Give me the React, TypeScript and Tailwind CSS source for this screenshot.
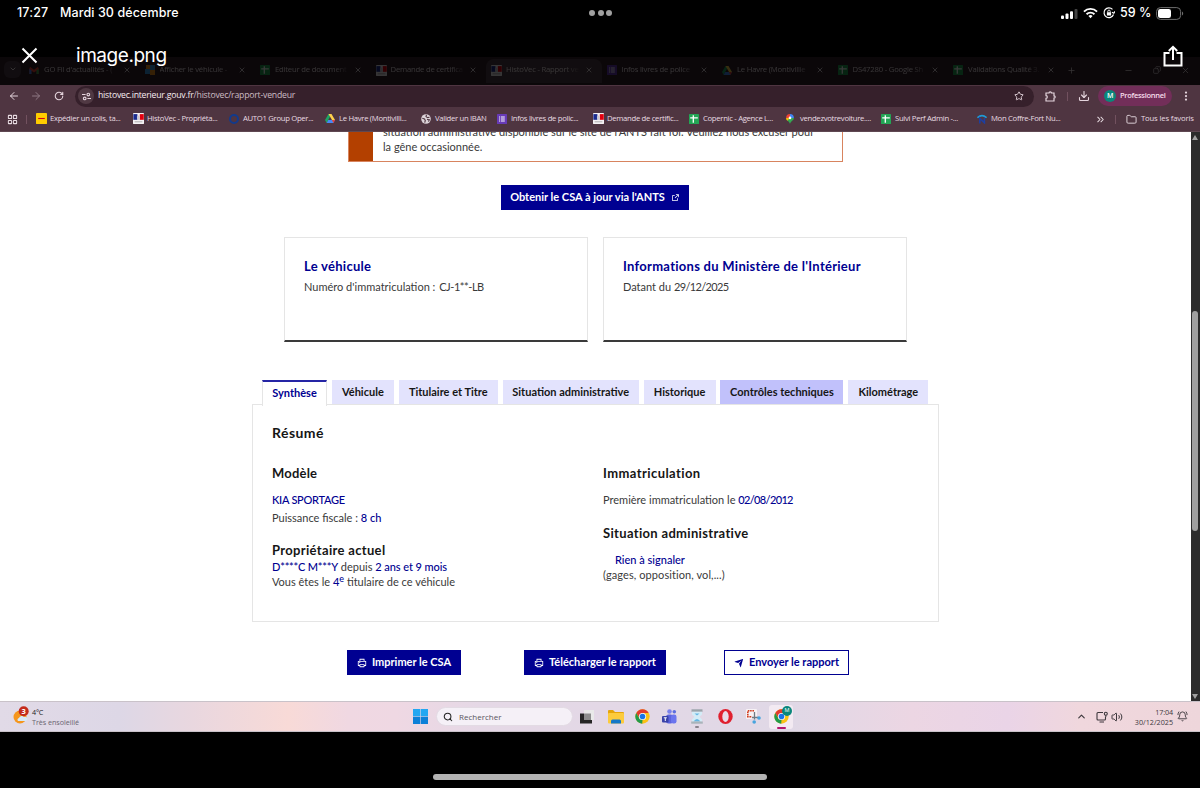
import type { ReactNode } from "react";
import clsx from "clsx";
import {
  ArrowLeft,
  ArrowRight,
  BellRing,
  ChevronDown,
  ChevronUp,
  ChevronsRight,
  Copy,
  Download,
  EllipsisVertical,
  Folder,
  LayoutGrid,
  Minus,
  Plus,
  RotateCw,
  Search,
  Star,
  Volume2,
  X,
} from "lucide-react";
import { RiExternalLinkLine, RiPrinterLine, RiSendPlaneFill } from "react-icons/ri";

/* ---------- small logos ---------- */

function FrenchFlag() {
  return (
    <svg viewBox="0 0 10 10" className="size-[11px] shrink-0">
      <rect width="10" height="10" rx=".4" fill="#f4f1f4" />
      <rect x=".3" y="1" width="3.700" height="5.200" fill="#1b2c8f" />
      <rect x="6.200" y="1" width="3.600" height="5.200" fill="#e1000f" />
      <path d="M3.500 3.500 5 2l1.200 2v2.200H4z" fill="#c9c9d4" />
      <path d="M1.500 8h7" stroke="#8a8a8a" strokeWidth=".6" />
    </svg>
  );
}

function Sheets() {
  return (
    <svg viewBox="0 0 10 10" className="size-[10px] shrink-0">
      <rect width="10" height="10" rx=".6" fill="#23a455" />
      <path d="M1.200 3.800h7.600M4.300 1.200v7.600" stroke="#fff" strokeWidth="1.300" />
    </svg>
  );
}

function Forms() {
  return (
    <svg viewBox="0 0 10 10" className="size-[10px] shrink-0">
      <rect width="10" height="10" rx=".6" fill="#673ab7" />
      <path d="M3.800 3h4M3.800 5h4M3.800 7h4M2 3h1M2 5h1M2 7h1" stroke="#fff" strokeWidth="1" />
    </svg>
  );
}

function Drive() {
  return (
    <svg viewBox="0 0 20 18" className="h-[9px] w-[10px] shrink-0">
      <path d="M7 0h6l-3 5.500L3.300 18 0 12z" fill="#1ea362" />
      <path d="M7 0h6l7 12h-6z" fill="#ffd04b" />
      <path d="M6.500 12H20l-3.300 6H3.300z" fill="#4688f4" />
      <path d="M14 12h6l-3.300 6z" fill="#e94235" />
    </svg>
  );
}

function Gmail() {
  return (
    <svg viewBox="0 0 20 15" className="h-[7px] w-[10px] shrink-0">
      <path d="M0 2v13h4.500V8L10 12l5.500-4v7H20V2l-2-2-8 6-8-6z" fill="#ea4335" />
      <path d="M0 4v11h4.500V7z" fill="#4285f4" />
      <path d="M20 4v11h-4.500V7z" fill="#34a853" />
    </svg>
  );
}

function Dhl() {
  return (
    <svg viewBox="0 0 10 10" className="size-[11px] shrink-0">
      <rect width="10" height="10" rx=".4" fill="#ffcc00" />
      <path d="M2 5h6" stroke="#d40511" strokeWidth="1" />
    </svg>
  );
}

function Squares() {
  return (
    <svg viewBox="0 0 10 10" className="size-[10px] shrink-0">
      <path d="M5 0h5v5H5z" fill="#3a9be8" />
      <path d="M0 4h5v5H0z" fill="#3a9be8" />
      <path d="M1 0h4v4H1zM5 5h5v5H5z" fill="#f2941e" />
    </svg>
  );
}

function Pin() {
  return (
    <svg viewBox="0 0 14 18" className="h-[10px] w-[8px] shrink-0">
      <path d="M7 18C6 12 0 12 0 7h14c0 5-6 5-7 11z" fill="#34a853" />
      <path d="M0 7a7 7 0 0 1 7-7v7z" fill="#ea4335" />
      <path d="M7 0a7 7 0 0 1 7 7H7z" fill="#4285f4" />
      <path d="M0 7h7l-5 5C.7 10.600 0 9 0 7z" fill="#fbbc04" />
      <circle cx="7" cy="7" r="2.400" fill="#fff" />
    </svg>
  );
}

function Earth() {
  return (
    <svg viewBox="0 0 10 10" className="size-[10px] shrink-0">
      <circle cx="5" cy="5" r="4.800" fill="#dcd3d8" />
      <path d="M1.300 4.200 3.500 5l.8 1.500-.6 2.200M5.500.8 5 2.600l1.500 1 2-.4M6 5.500l2.300.3-.8 1.800" fill="none" stroke="#4f3541" strokeWidth="1.100" />
    </svg>
  );
}

function CoffreFort() {
  return (
    <svg viewBox="0 0 10 10" className="size-[10px] shrink-0" fill="none">
      <path d="M.4 3.600q4.600-4 9.200 0" stroke="#1f9ad6" strokeWidth="1.500" />
      <path d="M2.800 9.600V4.400l4.600 4.400V4" stroke="#1d3fa0" strokeWidth="1.600" />
    </svg>
  );
}

function Chrome({ className }: { className?: string }) {
  return (
    <svg viewBox="0 0 48 48" className={clsx("shrink-0", className)}>
      <circle cx="24" cy="24" r="23" fill="#fbc116" />
      <path d="M4.100 12.500A23 23 0 0 1 43.900 12.500H24L14 29z" fill="#e33b2e" />
      <path d="M4.100 12.500 14 30l10 4-1 13A23 23 0 0 1 4.100 12.500z" fill="#229a4a" />
      <circle cx="24" cy="24" r="11.500" fill="#fff" />
      <circle cx="24" cy="24" r="9" fill="#1a73e8" />
    </svg>
  );
}

/* ---------- data ---------- */

const browserTabs: { label: string; icon: ReactNode; active?: boolean }[] = [
  { label: "GO Fil d'actualités - (", icon: <Gmail /> },
  { label: "Afficher le véhicule - ", icon: <Squares /> },
  { label: "Editeur de document", icon: <Sheets /> },
  { label: "Demande de certifica", icon: <FrenchFlag /> },
  { label: "HistoVec - Rapport ve", icon: <FrenchFlag />, active: true },
  { label: "Infos livres de police", icon: <Forms /> },
  { label: "Le Havre (Montivillie", icon: <Drive /> },
  { label: "DS47280 - Google Sh", icon: <Sheets /> },
  { label: "Validations Qualité 3.", icon: <Sheets /> },
];

const bookmarks: { label: string; icon: ReactNode; width: string }[] = [
  { label: "Expédier un colis, ta...", icon: <Dhl />, width: "w-[97px]" },
  { label: "HistoVec - Propriéta...", icon: <FrenchFlag />, width: "w-[96px]" },
  {
    label: "AUTO1 Group Oper...",
    icon: <span className="size-[10px] shrink-0 rounded-full border-[2.500px] border-[#123a8c]" />,
    width: "w-[96px]",
  },
  { label: "Le Havre (Montivilli...", icon: <Drive />, width: "w-[96px]" },
  { label: "Valider un IBAN", icon: <Earth />, width: "w-[76px]" },
  { label: "Infos livres de polic...", icon: <Forms />, width: "w-[96px]" },
  { label: "Demande de certific...", icon: <FrenchFlag />, width: "w-[96px]" },
  { label: "Copernic - Agence L...", icon: <Sheets />, width: "w-[97px]" },
  { label: "vendezvotrevoiture....", icon: <Pin />, width: "w-[95px]" },
  { label: "Suivi Perf Admin -...", icon: <Sheets />, width: "w-[96px]" },
  { label: "Mon Coffre-Fort Nu...", icon: <CoffreFort />, width: "w-[96px]" },
];

const reportTabs = [
  {
    label: "Synthèse",
    className: "w-[65px] border-t-2 border-x border-x-[#e5e5e5] border-t-[#2525a5] bg-white pb-[2px] text-[#000091] h-[26px]",
  },
  { label: "Véhicule", className: "w-[62px] bg-[#e3e3fd] text-[#161616] h-6" },
  { label: "Titulaire et Titre", className: "w-[99px] bg-[#e3e3fd] text-[#161616] h-6" },
  { label: "Situation administrative", className: "w-[136px] bg-[#e3e3fd] text-[#161616] h-6" },
  { label: "Historique", className: "w-[72px] bg-[#e3e3fd] text-[#161616] h-6" },
  { label: "Contrôles techniques", className: "w-[123px] bg-[#c1c1fb] text-[#161616] h-6" },
  { label: "Kilométrage", className: "w-[80px] bg-[#e3e3fd] text-[#161616] h-6" },
];

/* ---------- viewer chrome ---------- */

function StatusBar() {
  return (
    <div className="flex h-[26px] items-center pl-[17px] pr-[16px] text-[12.500px] font-medium text-white">
      <span className="w-[43px] tracking-[0.150px]">17:27</span>
      <span className="w-[532px] tracking-[0.100px]">Mardi 30 décembre</span>
      <div className="-ml-[3px] flex gap-[2.500px]">
        <span className="size-[6px] rounded-full bg-[#a0a0a0]" />
        <span className="size-[6px] rounded-full bg-[#a0a0a0]" />
        <span className="size-[6px] rounded-full bg-[#a0a0a0]" />
      </div>
      <div className="ml-auto flex items-center">
        <svg viewBox="0 0 18 12" className="mt-px h-3 w-[18px]" fill="#fff">
          <rect x="0" y="7.500" width="3" height="3.500" rx="1" />
          <rect x="4.500" y="5.500" width="3" height="5.500" rx="1" />
          <rect x="9" y="3.200" width="3" height="7.800" rx="1" />
          <rect x="13.500" y="1" width="3" height="10" rx="1" fill="#444" />
        </svg>
        <svg viewBox="0 0 16 12" className="ml-[4px] h-3 w-[15px]" fill="none" stroke="#fff" strokeWidth="2">
          <path d="M1 4.500a10 10 0 0 1 14 0M3.800 7.300a6 6 0 0 1 8.400 0" />
          <path d="M8 11.500 5.800 9.300a3 3 0 0 1 4.400 0z" fill="#fff" stroke="none" />
        </svg>
        <svg viewBox="0 0 12 12" className="ml-[5px] size-[12px]" fill="none" stroke="#fff" strokeWidth="1.200">
          <path d="M9.500 2.300A4.900 4.900 0 1 0 10.500 7.500" />
          <path d="m9 5.200 1.800 1 1.100-1.800" />
          <rect x="3.900" y="5.300" width="4.200" height="3.200" rx=".5" fill="#fff" stroke="none" />
          <path d="M4.800 5.500V4.300a1.200 1.200 0 0 1 2.400 0v1.200" strokeWidth=".9" />
        </svg>
        <span className="ml-[5px] w-[31px] whitespace-nowrap">59 %</span>
        <svg viewBox="0 0 28 13" className="ml-[5px] h-[13px] w-[28px]">
          <rect x=".6" y=".6" width="24" height="11.800" rx="3.800" fill="none" stroke="#6e6e6e" />
          <rect x="2" y="2" width="13" height="9" rx="2.300" fill="#fff" />
          <path d="M26 4.500c1.600.5 1.600 3.500 0 4z" fill="#6e6e6e" />
        </svg>
      </div>
    </div>
  );
}

function ViewerHeader() {
  return (
    <header className="absolute inset-x-0 top-0 z-10 h-[85px] bg-black/78 font-['Inter',sans-serif]">
      <StatusBar />
      <div className="flex h-[59px] items-center pl-[21px] pr-[17px] text-white">
        <svg viewBox="0 0 17 17" className="size-[17px]" stroke="#fff" strokeWidth="2">
          <path d="m1.500 1.500 14 14M15.500 1.500l-14 14" />
        </svg>
        <h1 className="ml-[38px] text-[19px] leading-none font-normal tracking-[-0.450px]">image.png</h1>
        <svg viewBox="0 0 20 22" className="ml-auto h-[22px] w-[20px]" fill="none" stroke="#fff" strokeWidth="2">
          <path d="M6.500 8H1.500v12.500h17V8h-5M10 15V2M5.800 6 10 1.800 14.200 6" />
        </svg>
      </div>
    </header>
  );
}

/* ---------- browser ---------- */

function TabStrip() {
  return (
    <div className="flex h-7 items-center bg-[#33202b] text-[7.700px] text-[#f3e8ee]">
      <span className="mb-1 ml-1 flex size-[17px] items-center justify-center rounded-md bg-[#503e48]">
        <ChevronDown className="size-[8px]" strokeWidth={3} />
      </span>
      <div className="ml-[3px] flex">
        {browserTabs.map((tab) => (
          <div
            key={tab.label}
            className={clsx(
              "flex h-6 w-[115.500px] items-center rounded-t-lg pb-[2px] pl-[5px] pr-[9px]",
              tab.active && "bg-[#503e48]"
            )}
          >
            <span className="flex w-[15px] shrink-0">{tab.icon}</span>
            <span className="w-[74px] shrink-0 whitespace-nowrap mask-r-from-80% tracking-[-0.200px]">
              {tab.label}
            </span>
            <X className="ml-auto size-[8px] shrink-0" strokeWidth={2.500} />
          </div>
        ))}
      </div>
      <Plus className="mb-[2px] ml-[3px] size-[9px]" />
      <Minus className="mb-[2px] ml-auto size-[9px]" />
      <Copy className="mb-[2px] ml-[20px] size-[8px] -scale-x-100" />
      <X className="mb-[2px] ml-[20px] mr-[10px] size-[9px]" />
    </div>
  );
}

function Toolbar() {
  return (
    <div className="flex h-[22px] items-center bg-[#4f3541] text-[#e5d5dd]">
      <ArrowLeft className="ml-[8px] size-[12px]" strokeWidth={2} />
      <ArrowRight className="ml-[10px] size-[12px] text-[#8f7984]" strokeWidth={2} />
      <RotateCw className="ml-[12px] size-[10px]" strokeWidth={2.600} />
      <div className="ml-[11px] flex h-[21px] w-[959px] items-center rounded-full bg-[#36202b] pl-[3px] pr-[10px]">
        <span className="flex size-[16px] items-center justify-center rounded-full bg-[#503943]">
          <svg viewBox="0 0 10 10" className="size-[9px]" fill="none" stroke="#e5d5dd" strokeWidth="1.200">
            <path d="M0 2.800h4M6 7.200h4" />
            <circle cx="7" cy="2.800" r="1.500" />
            <circle cx="3" cy="7.200" r="1.500" />
          </svg>
        </span>
        <span className="ml-[4px] text-[8.700px] tracking-[-0.220px] text-[#ccbcc4]">
          <span className="text-[#f6edf2]">histovec.interieur.gouv.fr</span>/histovec/rapport-vendeur
        </span>
        <Star className="ml-auto size-[10px]" strokeWidth={2.200} />
      </div>
      <svg viewBox="0 0 11 11" className="ml-[11px] size-[11px]" fill="none" stroke="currentColor" strokeWidth="1.200">
        <path d="M1 2h3a1.200 1.200 0 0 1 2.400 0H9v2.800a1.200 1.200 0 0 1 0 2.400V10H1V7.300a1.300 1.300 0 0 0 0-2.600z" />
      </svg>
      <span className="ml-[11px] h-[9px] w-px bg-[#72515f]" />
      <Download className="ml-[10px] size-[12px]" strokeWidth={2.200} />
      <div className="ml-[8px] flex h-[20px] w-[74px] items-center rounded-full bg-[#722e59] pl-[6px] text-[7.500px] font-semibold tracking-[-0.300px] text-[#f7dcea]">
        <span className="mr-[4px] flex size-[12px] items-center justify-center rounded-full bg-[#0a877b] text-[7px] text-white">
          M
        </span>
        Professionnel
      </div>
      <EllipsisVertical className="ml-[8px] size-[12px]" strokeWidth={2.500} />
    </div>
  );
}

function BookmarksBar() {
  return (
    <div className="flex h-[25px] items-center border-b border-[#5f4852] bg-[#4f3541] text-[7.700px] tracking-[-0.300px] text-[#e8dce2]">
      <LayoutGrid className="ml-[7px] size-[11px]" strokeWidth={2.200} />
      <span className="ml-[8px] mr-[9px] h-[9px] w-px bg-[#72515f]" />
      {bookmarks.map((b) => (
        <div key={b.label} className={clsx("flex shrink-0 items-center whitespace-nowrap", b.width)}>
          <span className="flex w-[14px] shrink-0">{b.icon}</span>
          {b.label}
        </div>
      ))}
      <ChevronsRight className="ml-auto size-[11px]" strokeWidth={2.200} />
      <span className="ml-[9px] h-[9px] w-px bg-[#72515f]" />
      <Folder className="ml-[10px] size-[11px]" />
      <span className="ml-[4px] mr-[9px] w-[50px] whitespace-nowrap tracking-[-0.150px]">Tous les favoris</span>
    </div>
  );
}

/* ---------- report page ---------- */

function InfoCard({ title, children }: { title: string; children: ReactNode }) {
  return (
    <div className="h-[105px] w-[304px] border border-b-[2.500px] border-[#e5e5e5] border-b-[#3a3a3a] px-[19px] pt-[19px]">
      <h3 className="text-[13px] leading-[18px] font-bold tracking-[0.280px] text-[#000091]">{title}</h3>
      <p className="mt-[4px] leading-4">{children}</p>
    </div>
  );
}

function Blue({ children, className }: { children: ReactNode; className?: string }) {
  return <span className={clsx("font-medium text-[#000091]", className)}>{children}</span>;
}

function ActionButton({ icon, children, className }: { icon: ReactNode; children: ReactNode; className: string }) {
  return (
    <button
      className={clsx(
        "flex h-[25px] items-center justify-center gap-[5px] whitespace-nowrap border border-[#000091] text-[11px] font-bold",
        className
      )}
    >
      {icon}
      {children}
    </button>
  );
}

function Report() {
  return (
    <main className="relative flex-1 overflow-hidden font-['Lato',sans-serif] text-[11px] text-[#3a3a3a]">
      <div className="-mt-[8px] ml-[348px] flex h-[38px] w-[495px] border border-[#d8845e]">
        <div className="w-[24px] bg-[#b34000]" />
        <p className="-mt-px ml-[10px] whitespace-nowrap leading-[15px]">
          situation administrative disponible sur le site de l'ANTS fait foi. Veuillez nous excuser pour
          <br />
          la gêne occasionnée.
        </p>
      </div>

      <button className="ml-[501px] mt-[23px] flex h-[25px] w-[188px] items-center justify-center gap-[6px] whitespace-nowrap bg-[#000091] text-[11px] font-bold text-white">
        Obtenir le CSA à jour via l'ANTS
        <RiExternalLinkLine className="size-[9px]" />
      </button>

      <div className="ml-[284px] mt-[27px] flex gap-[15px]">
        <InfoCard title="Le véhicule">
          Numéro d'immatriculation : <span className="ml-[1px] tracking-[-0.450px]">CJ-1**-LB</span>
        </InfoCard>
        <InfoCard title="Informations du Ministère de l'Intérieur">
          Datant du <span className="tracking-[-0.650px]">29/12/2025</span>
        </InfoCard>
      </div>

      <div className="relative z-[1] -mb-px ml-[262px] mt-[38px] flex h-[25px] items-start gap-[4.900px]">
        {reportTabs.map((tab) => (
          <div
            key={tab.label}
            className={clsx(
              "flex shrink-0 items-center justify-center whitespace-nowrap text-[11px] font-bold",
              tab.className
            )}
          >
            {tab.label}
          </div>
        ))}
      </div>

      <section className="ml-[252px] flex h-[218px] w-[687px] border border-[#e5e5e5] pl-[19px] pt-[18px]">
        <div className="w-[331px]">
          <h2 className="text-[14px] leading-5 font-bold tracking-[0.450px] text-[#161616]">Résumé</h2>
          <h3 className="mt-5 text-[13px] leading-5 font-bold tracking-[0.200px] text-[#161616]">Modèle</h3>
          <p className="mt-[9px] leading-4">
            <Blue className="tracking-[-0.250px]">KIA SPORTAGE</Blue>
          </p>
          <p className="mt-[2px] leading-4">
            Puissance fiscale : <Blue>8 ch</Blue>
          </p>
          <h3 className="mt-[15px] text-[13px] leading-[18px] font-bold tracking-[0.330px] text-[#161616]">
            Propriétaire actuel
          </h3>
          <p className="leading-[15px]">
            <Blue className="tracking-[-0.200px]">D****C M***Y</Blue> depuis{" "}
            <Blue className="tracking-[-0.080px]">2 ans et 9 mois</Blue>
          </p>
          <p className="leading-[15px]">
            Vous êtes le{" "}
            <Blue>
              4<sup className="text-[9px] leading-none">e</sup>
            </Blue>{" "}
            titulaire de ce véhicule
          </p>
        </div>
        <div className="pt-10">
          <h3 className="text-[13px] leading-5 font-bold tracking-[0.420px] text-[#161616]">Immatriculation</h3>
          <p className="mt-[9px] leading-4">
            Première immatriculation le <Blue className="tracking-[-0.650px]">02/08/2012</Blue>
          </p>
          <h3 className="mt-4 text-[13px] leading-[18px] font-bold tracking-[0.330px] text-[#161616]">
            Situation administrative
          </h3>
          <p className="mt-[10px] pl-3 leading-4">
            <Blue>Rien à signaler</Blue>
          </p>
          <p className="leading-[14px] tracking-[0.080px]">(gages, opposition, vol,...)</p>
        </div>
      </section>

      <div className="ml-[347px] mt-[28px] flex">
        <ActionButton icon={<RiPrinterLine className="size-[10px]" />} className="w-[114px] bg-[#000091] text-white">
          Imprimer le CSA
        </ActionButton>
        <ActionButton
          icon={<RiPrinterLine className="size-[10px]" />}
          className="ml-[63px] w-[142px] bg-[#000091] text-white"
        >
          Télécharger le rapport
        </ActionButton>
        <ActionButton icon={<RiSendPlaneFill className="size-[10px]" />} className="ml-[58px] w-[125px] text-[#000091]">
          Envoyer le rapport
        </ActionButton>
      </div>
    </main>
  );
}

function Scrollbar() {
  return (
    <div className="flex w-[9.500px] flex-col items-center bg-[#2c2c2c] text-[#a0a0a0]">
      <svg viewBox="0 0 6 5" className="mt-[3px] h-[5px] w-[6px]" fill="currentColor">
        <path d="M3 0 6 5H0z" />
      </svg>
      <span className="mt-[171px] h-[220px] w-[6px] rounded-full bg-[#9f9f9f]" />
      <svg viewBox="0 0 6 5" className="mb-[2px] mt-auto h-[5px] w-[6px]" fill="currentColor">
        <path d="M3 5 6 0H0z" />
      </svg>
    </div>
  );
}

/* ---------- windows taskbar ---------- */

function Weather() {
  return (
    <div className="flex w-[400px] items-center pl-[13px]">
      <svg viewBox="0 0 16 18" className="mb-[3px] h-[18px] w-[16px]">
        <circle cx="7" cy="11" r="6.500" fill="#f5961d" />
        <path d="M5 15a2 2 0 0 1 1-3 3 3 0 0 1 5-1 2.200 2.200 0 0 1 2 4z" fill="#d6e9f9" />
        <circle cx="10.700" cy="5.300" r="5" fill="#c42b1c" />
        <text x="10.700" y="8" textAnchor="middle" fontSize="7.500" fontWeight="700" fill="#fff">
          3
        </text>
      </svg>
      <div className="ml-[3px] text-[7.200px] leading-[10px] text-[#6a6570]">
        <div className="tracking-[-0.200px] text-[#222]">4°C</div>
        <div className="tracking-[-0.050px]">Très ensoleillé</div>
      </div>
    </div>
  );
}

function TaskbarApps() {
  return (
    <div className="flex items-center">
      <svg viewBox="0 0 15 15" className="ml-[13px] size-[15px]">
        <path d="M0 0h7.200v7.200H0zM7.800 0H15v7.200H7.800z" fill="#22a7f2" />
        <path d="M0 7.800h7.200V15H0zM7.800 7.800H15V15H7.800z" fill="#0c80d8" />
      </svg>
      <div className="ml-[8px] flex h-[19px] w-[137px] items-center rounded-full border border-[#e3dbe4] bg-[#f5f0f7] pl-[6px] text-[8px] text-[#5a5560]">
        <Search className="mr-[6px] size-[10px] text-[#222]" strokeWidth={2.500} />
        Rechercher
      </div>
      <svg viewBox="0 0 14 14" className="ml-[7px] size-[14px]">
        <rect x="4" y="0" width="10" height="10" fill="#e9e9e9" />
        <path d="M0 3.500h4V10h8v3.500H0z" fill="#262626" />
        <path d="M4 3.500h7V10H4z" fill="#8d8d8d" />
      </svg>
      <svg viewBox="0 0 16 14" className="ml-[14px] h-[14px] w-[16px]">
        <path d="M0 1q0-1 1-1h4l2 2h8q1 0 1 1v2H0z" fill="#e5a50a" />
        <rect y="3" width="16" height="10.500" rx="1" fill="#fccb3c" />
        <path d="M3 13.500V11q0-1.500 1.500-1.500h7Q13 9.500 13 11v2.500z" fill="#1577c8" />
      </svg>
      <Chrome className="ml-[11px] size-[15px]" />
      <svg viewBox="0 0 15 15" className="ml-[12px] size-[15px]">
        <circle cx="7.500" cy="2.500" r="2.300" fill="#7b83eb" />
        <circle cx="12.300" cy="2.800" r="1.800" fill="#5b6de0" />
        <rect x="4" y="5.500" width="7" height="9" rx="2.500" fill="#5b63dc" />
        <rect x="9" y="5.500" width="5.500" height="9" rx="2.300" fill="#6b75ee" />
        <rect y="7" width="6.500" height="6.500" rx="1" fill="#3a42a8" />
        <path d="M1.800 8.800h3M3.300 8.800v3.200" stroke="#fff" />
      </svg>
      <div className="ml-[13px] flex flex-col items-center pt-[4px]">
        <svg viewBox="0 0 14 15" className="h-[15px] w-[14px]">
          <path d="M1.500.3h11v2.500h-11z" fill="#9aa4aa" />
          <path d="M2 2.800h10v2.700L9.500 7.800l2.500 2.700v2H2v-2l2.500-2.700L2 5.500z" fill="#d3ecf7" />
          <path d="M3.500 12.500q3.500-5 7 0zM4.500 4.500h5L7 6.500z" fill="#64b6e4" />
          <path d="M1.200 12.500h11.600v2.200H1.200z" fill="#a9b4ba" />
        </svg>
        <span className="mt-[2px] h-[2px] w-[4px] rounded-full bg-[#88828c]" />
      </div>
      <svg viewBox="0 0 15 15" className="ml-[14px] size-[15px]">
        <ellipse cx="7.500" cy="7.500" rx="7.200" ry="7.400" fill="#e0202f" />
        <ellipse cx="7.500" cy="7.500" rx="3.200" ry="5.400" fill="#e8dbe8" />
      </svg>
      <svg viewBox="0 0 15 15" className="ml-[13px] size-[15px]" fill="none">
        <rect width="11" height="10" rx="1" fill="#f7f2f5" />
        <path d="M8 1.800H1.800v6H6" stroke="#d13c1e" strokeWidth="1.600" strokeDasharray="1.600 .7" />
        <path d="M8.500 3v7.500M6 8.500h6.500" stroke="#6f7a84" strokeWidth="1.300" />
        <circle cx="8.200" cy="13" r="1.800" fill="#48a4de" />
        <circle cx="13" cy="9" r="1.800" fill="#48a4de" />
      </svg>
      <div className="relative ml-[8px] flex h-[24px] w-[24px] items-center justify-center rounded-[3px] bg-[#f3eaf2]">
        <Chrome className="size-[15px]" />
        <span className="absolute right-[1px] top-[1px] flex size-[10px] items-center justify-center rounded-full bg-[#0a877b] text-[5.500px] text-white">
          M
        </span>
        <span className="absolute bottom-0 h-[2px] w-[9px] rounded-full bg-[#b5156c]" />
      </div>
    </div>
  );
}

function Taskbar() {
  return (
    <footer className="flex h-[31px] items-center border-y border-[#c9c2c9] bg-[linear-gradient(90deg,#e1dae7_0%,#ddd7e6_10%,#e9d7df_16%,#f8dad7_24%,#f0d8e2_29%,#efd8e3_33%,#e5d8e6_40%,#e0d8e6_66%,#ecd6e3_76%,#ead4e7_84%,#f0d7dd_90%,#eed6db_100%)]">
      <Weather />
      <TaskbarApps />
      <div className="ml-auto flex items-center text-[#3c373c]">
        <ChevronUp className="size-[11px]" strokeWidth={2.500} />
        <svg viewBox="0 0 12 12" className="ml-[9px] size-[12px]" fill="none" stroke="currentColor" strokeWidth="1.100">
          <path d="M7 1.500H2q-1 0-1 1V8q0 1 1 1h6.500q1 0 1-1V6M3.500 11h4.500" />
          <circle cx="9.800" cy="2.700" r="1.500" />
          <path d="M9.800 4.200V6" />
        </svg>
        <Volume2 className="ml-[3px] size-[12px]" />
        <div className="ml-[8px] w-[42px] text-right text-[7.200px] leading-[10px]">
          <div className="tracking-[-0.100px]">17:04</div>
          <div>30/12/2025</div>
        </div>
        <BellRing className="ml-[4px] mr-[12px] size-[11px]" />
      </div>
    </footer>
  );
}

export default function App() {
  return (
    <div className="relative flex h-[788px] w-[1200px] flex-col overflow-hidden bg-black pt-[57px] font-['Open_Sans',sans-serif]">
      <ViewerHeader />
      <TabStrip />
      <Toolbar />
      <BookmarksBar />
      <div className="flex h-[569px] bg-white">
        <Report />
        <Scrollbar />
      </div>
      <Taskbar />
      <div className="mx-auto mt-[42px] h-[6px] w-[334px] rounded-full bg-[#b3b3b3]" />
    </div>
  );
}
